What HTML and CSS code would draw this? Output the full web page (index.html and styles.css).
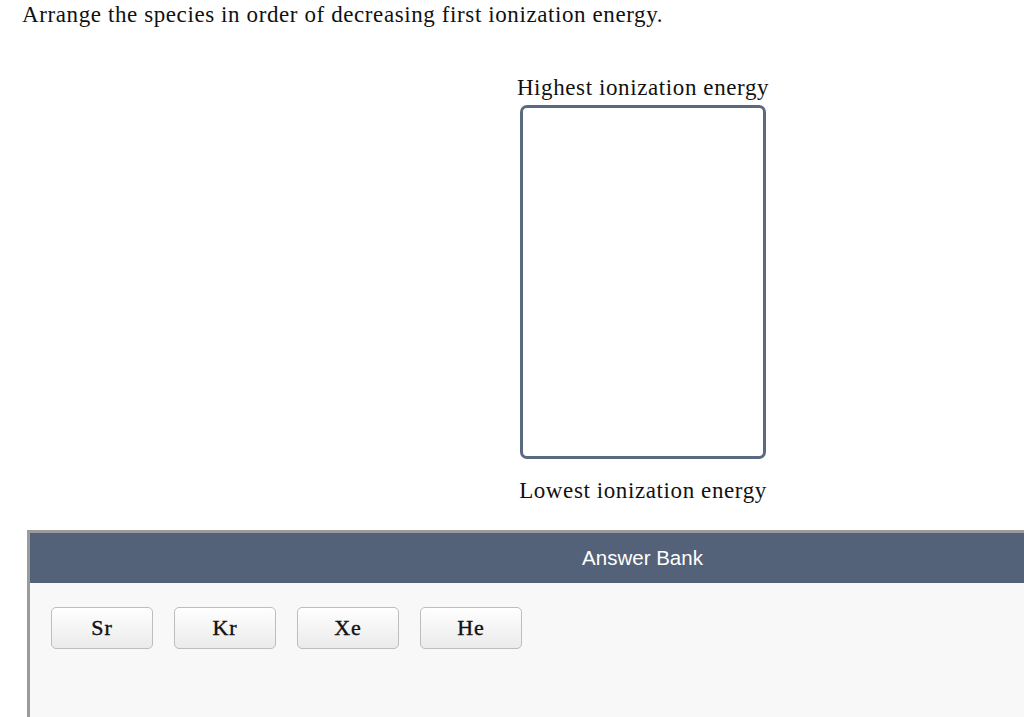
FILE: index.html
```html
<!DOCTYPE html>
<html>
<head>
<meta charset="utf-8">
<link rel="stylesheet" href="styles.css">
</head>
<body>
<p class="title">Arrange the species in order of decreasing first ionization energy.</p>
<div class="ranking">
  <div class="label">Highest ionization energy</div>
  <div class="box"></div>
  <div class="label label-bottom">Lowest ionization energy</div>
</div>
<div class="bank">
  <div class="bank-header">Answer Bank</div>
  <div class="bank-body">
    <div class="chip">Sr</div>
    <div class="chip">Kr</div>
    <div class="chip">Xe</div>
    <div class="chip">He</div>
  </div>
</div>
</body>
</html>
```
FILE: styles.css
```css
html, body {
  margin: 0;
  padding: 0;
  background: #ffffff;
  overflow: hidden;
}
body {
  width: 1024px;
  height: 717px;
  font-family: "Liberation Serif", "Times New Roman", serif;
  color: #111;
}
.title {
  margin: 0;
  padding: 2px 0 0 22px;
  font-size: 23px;
  line-height: 25px;
  letter-spacing: 0.6px;
  white-space: nowrap;
}
.ranking {
  margin-top: 48px;
  margin-left: 517px;
  width: 252px;
  display: flex;
  flex-direction: column;
  align-items: center;
}
.label {
  font-size: 23px;
  line-height: 25px;
  letter-spacing: 0.6px;
  white-space: nowrap;
}
.box {
  box-sizing: border-box;
  margin-top: 5px;
  width: 246px;
  height: 354px;
  border: 3px solid #5b6a80;
  border-radius: 7px;
  background: #fff;
}
.label-bottom {
  margin-top: 19px;
}
.bank {
  box-sizing: border-box;
  margin-top: 27px;
  margin-left: 27px;
  width: 1228px;
  border-top: 3px solid #9b9b9b;
  border-left: 3px solid #9b9b9b;
}
.bank-header {
  height: 50px;
  background: #536278;
  color: #ffffff;
  font-family: "Liberation Sans", Arial, sans-serif;
  font-size: 20.5px;
  line-height: 50px;
  text-align: center;
}
.bank-body {
  background: #f8f8f8;
  padding: 24px 21px;
  min-height: 200px;
  display: flex;
  gap: 21px;
  align-items: flex-start;
}
.chip {
  box-sizing: border-box;
  width: 102px;
  height: 42px;
  border: 1px solid #bdbdbd;
  border-radius: 5px;
  background: linear-gradient(#ffffff, #ebebeb);
  display: flex;
  align-items: center;
  justify-content: center;
  font-family: "Liberation Serif", serif;
  font-size: 22px;
  letter-spacing: 1px;
  -webkit-text-stroke: 0.4px #111;
  color: #111;
}
```
